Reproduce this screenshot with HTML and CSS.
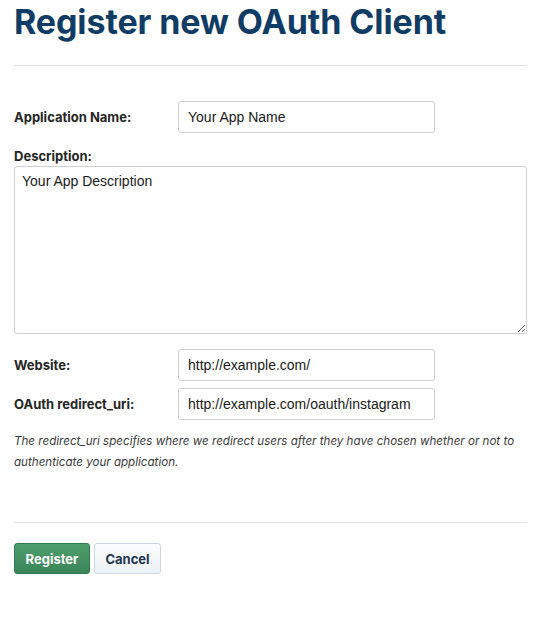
FILE: index.html
```html
<!DOCTYPE html>
<html>
<head>
<meta charset="utf-8">
<link rel="stylesheet" href="styles.css">
</head>
<body>
<div class="page">
  <h1 class="title">Register new OAuth Client</h1>
  <hr class="rule rule-top">
  <form class="form">
    <div class="row">
      <label class="label">Application Name:</label>
      <input class="field" type="text" value="Your App Name">
    </div>
    <div class="stack">
      <label class="label">Description:</label>
      <textarea class="area">Your App Description</textarea>
    </div>
    <div class="row row-web">
      <label class="label">Website:</label>
      <input class="field" type="text" value="http://example.com/">
    </div>
    <div class="row row-uri">
      <label class="label">OAuth redirect_uri:</label>
      <input class="field" type="text" value="http://example.com/oauth/instagram">
    </div>
    <p class="help">The redirect_uri specifies where we redirect users after they have chosen whether or not to authenticate your application.</p>
    <hr class="rule rule-bottom">
    <div class="actions">
      <button type="button" class="btn btn-primary">Register</button>
      <button type="button" class="btn btn-default">Cancel</button>
    </div>
  </form>
</div>
</body>
</html>
```
FILE: styles.css
```css
html, body {
  margin: 0;
  padding: 0;
  background: #ffffff;
}
body {
  font-family: "Inter", "Liberation Sans", sans-serif;
  color: #262626;
}
.page {
  width: 513px;
  padding: 0 16px 0 14px;
}
.title {
  margin: 0;
  padding-top: 2px;
  font-size: 34px;
  line-height: 40px;
  font-weight: 700;
  color: #0f3c65;
  letter-spacing: -0.1px;
}
.rule {
  border: 0;
  height: 1px;
  background: #e2e2e2;
  margin: 0;
}
.rule-top {
  margin-top: 23px;
}
.form {
  margin: 0;
}
.row {
  display: flex;
  align-items: center;
}
.row:first-child {
  margin-top: 35px;
}
.label {
  width: 164px;
  flex: none;
  font-size: 13px;
  font-weight: 700;
  color: #262626;
}
.field {
  box-sizing: border-box;
  width: 257px;
  height: 32px;
  margin: 0;
  padding: 0 9px;
  border: 1px solid #cfcfcf;
  border-radius: 3px;
  font-family: "Liberation Sans", sans-serif;
  font-size: 14px;
  color: #1a1a1a;
  background: #fff;
}
.stack {
  display: flex;
  flex-direction: column;
  margin-top: 15px;
}
.stack .label {
  line-height: 16px;
  margin-bottom: 2px;
}
.area {
  box-sizing: border-box;
  width: 513px;
  height: 168px;
  margin: 0;
  padding: 6px 7px;
  border: 1px solid #cfcfcf;
  border-radius: 3px;
  font-family: "Liberation Sans", sans-serif;
  font-size: 14px;
  line-height: 17px;
  color: #1a1a1a;
  resize: both;
}
.row-web {
  margin-top: 15px;
}
.row-uri {
  margin-top: 7px;
}
.help {
  margin: 11px 0 0;
  font-size: 11.6px;
  line-height: 21px;
  font-style: italic;
  color: #3a3a3a;
}
.rule-bottom {
  margin-top: 49px;
}
.actions {
  display: flex;
  gap: 4px;
  margin-top: 20px;
}
.btn {
  box-sizing: border-box;
  height: 31px;
  padding: 0 10px;
  border-radius: 3px;
  font-family: "Inter", "Liberation Sans", sans-serif;
  font-size: 13px;
  font-weight: 700;
  cursor: pointer;
}
.btn-primary {
  width: 76px;
  color: #ffffff;
  background: linear-gradient(#4f9e6e, #3b8558);
  border: 1px solid #357a50;
}
.btn-default {
  width: 67px;
  color: #1e3550;
  background: linear-gradient(#fbfcfd, #eef2f6);
  border: 1px solid #cdd6df;
}
```
